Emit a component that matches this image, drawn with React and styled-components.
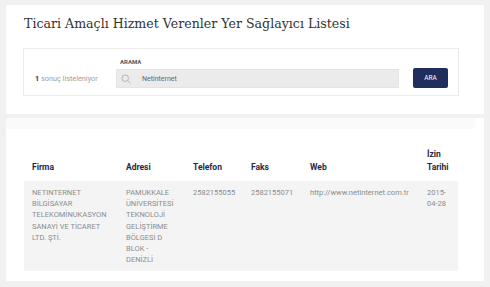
import styled, { createGlobalStyle } from "styled-components";

const GlobalStyle = createGlobalStyle`
  html, body {
    margin: 0;
    padding: 0;
    background: #f1f1f1;
    font-family: Roboto, "Liberation Sans", sans-serif;
  }
  * {
    box-sizing: border-box;
  }
`;

const columns = [
  { key: "firma", title: "Firma", width: 94 },
  { key: "adres", title: "Adresi", width: 67 },
  { key: "tel", title: "Telefon", width: 58 },
  { key: "faks", title: "Faks", width: 59 },
  { key: "web", title: "Web", width: 117 },
  { key: "tarih", title: "İzin Tarihi", width: 39 },
];

const rows = [
  {
    firma: "NETINTERNET BİLGİSAYAR TELEKOMİNUKASYON SANAYİ VE TİCARET LTD. ŞTİ.",
    adres: "PAMUKKALE ÜNİVERSİTESİ TEKNOLOJİ GELİŞTİRME BÖLGESİ D BLOK - DENİZLİ",
    tel: "2582155055",
    faks: "2582155071",
    web: "http://www.netinternet.com.tr",
    tarih: "2015-04-28",
  },
];

function SearchIcon() {
  return (
    <svg width="10" height="10" viewBox="0 0 10 10" fill="none">
      <circle cx="4.2" cy="4.2" r="3.3" stroke="#b0b0b0" strokeWidth="0.9" />
      <path d="M6.6 6.6L9.2 9.2" stroke="#b0b0b0" strokeWidth="0.9" strokeLinecap="round" />
    </svg>
  );
}

function App() {
  return (
    <Page>
      <GlobalStyle />
      <Card>
        <Title>Ticari Amaçlı Hizmet Verenler Yer Sağlayıcı Listesi</Title>
        <SearchBox>
          <Count>
            <b>1</b> sonuç listeleniyor
          </Count>
          <Field>
            <Label>ARAMA</Label>
            <InputWrap>
              <SearchIcon />
              <span>Netinternet</span>
            </InputWrap>
          </Field>
          <SearchButton>ARA</SearchButton>
        </SearchBox>
      </Card>

      <ListCard>
        <TopBand />
        <Table>
          <colgroup>
            {columns.map((c) => (
              <col key={c.key} style={{ width: c.width }} />
            ))}
          </colgroup>
          <thead>
            <tr>
              {columns.map((c) => (
                <Th key={c.key}>{c.title}</Th>
              ))}
            </tr>
          </thead>
          <tbody>
            {rows.map((r, i) => (
              <Row key={i}>
                {columns.map((c) => (
                  <Td key={c.key} $lower={c.key === "web"}>
                    {r[c.key]}
                  </Td>
                ))}
              </Row>
            ))}
          </tbody>
        </Table>
      </ListCard>
    </Page>
  );
}

const Page = styled.div`
  padding: 5px 6px 7px 6px;
  display: flex;
  flex-direction: column;
  gap: 4px;
`;

const Card = styled.section`
  background: #fff;
  padding: 9px 25px 18px 17px;
`;

const Title = styled.h1`
  margin: 0 0 14px 1px;
  font-family: "DejaVu Serif", "Liberation Serif", serif;
  font-weight: normal;
  font-size: 12.6px;
  line-height: 20px;
  color: #333;
`;

const SearchBox = styled.div`
  display: flex;
  align-items: flex-end;
  border: 1px solid #ececec;
  padding: 9px 9px 7px 11px;
`;

const Count = styled.div`
  flex: 0 0 81px;
  font-size: 7.3px;
  line-height: 19px;
  color: #a0a0a0;
  b {
    color: #333;
    font-weight: 700;
  }
`;

const Field = styled.div`
  flex: 0 0 283px;
  display: flex;
  flex-direction: column;
`;

const Label = styled.div`
  font-size: 6px;
  font-weight: 700;
  line-height: 8px;
  color: #555;
  margin: 0 0 3px 4px;
`;

const InputWrap = styled.div`
  height: 19px;
  background: #ebebeb;
  border: 1px solid #e4e4e4;
  display: flex;
  align-items: center;
  gap: 11px;
  padding-left: 4px;
  font-size: 7px;
  color: #666;
`;

const SearchButton = styled.button`
  margin-left: 14px;
  width: 35px;
  height: 20px;
  border: none;
  border-radius: 2px;
  background: #1f2e5c;
  color: #fff;
  font-family: Roboto, sans-serif;
  font-size: 6.5px;
  padding: 0;
`;

const ListCard = styled.section`
  background: #fff;
  height: 163px;
  padding: 0 9px 0 18px;
`;

const TopBand = styled.div`
  height: 11px;
  background: #fafafa;
  margin-left: -18px;
`;

const Table = styled.table`
  margin: 19px 0 0 0;
  width: 434px;
  table-layout: fixed;
  border-collapse: collapse;
`;

const Th = styled.th`
  text-align: left;
  vertical-align: bottom;
  padding: 0 8px 7px 8px;
  font-size: 8.5px;
  line-height: 13px;
  font-weight: 700;
  color: #1e2b4a;
`;

const Row = styled.tr`
  background: #f4f4f4;
`;

const Td = styled.td`
  vertical-align: top;
  padding: 6px 8px 6px 8px;
  font-size: 7.5px;
  line-height: 11.2px;
  color: #8c8c8c;
  text-transform: ${(p) => (p.$lower ? "none" : "uppercase")};
  white-space: ${(p) => (p.$lower ? "nowrap" : "normal")};
`;

export default App;
